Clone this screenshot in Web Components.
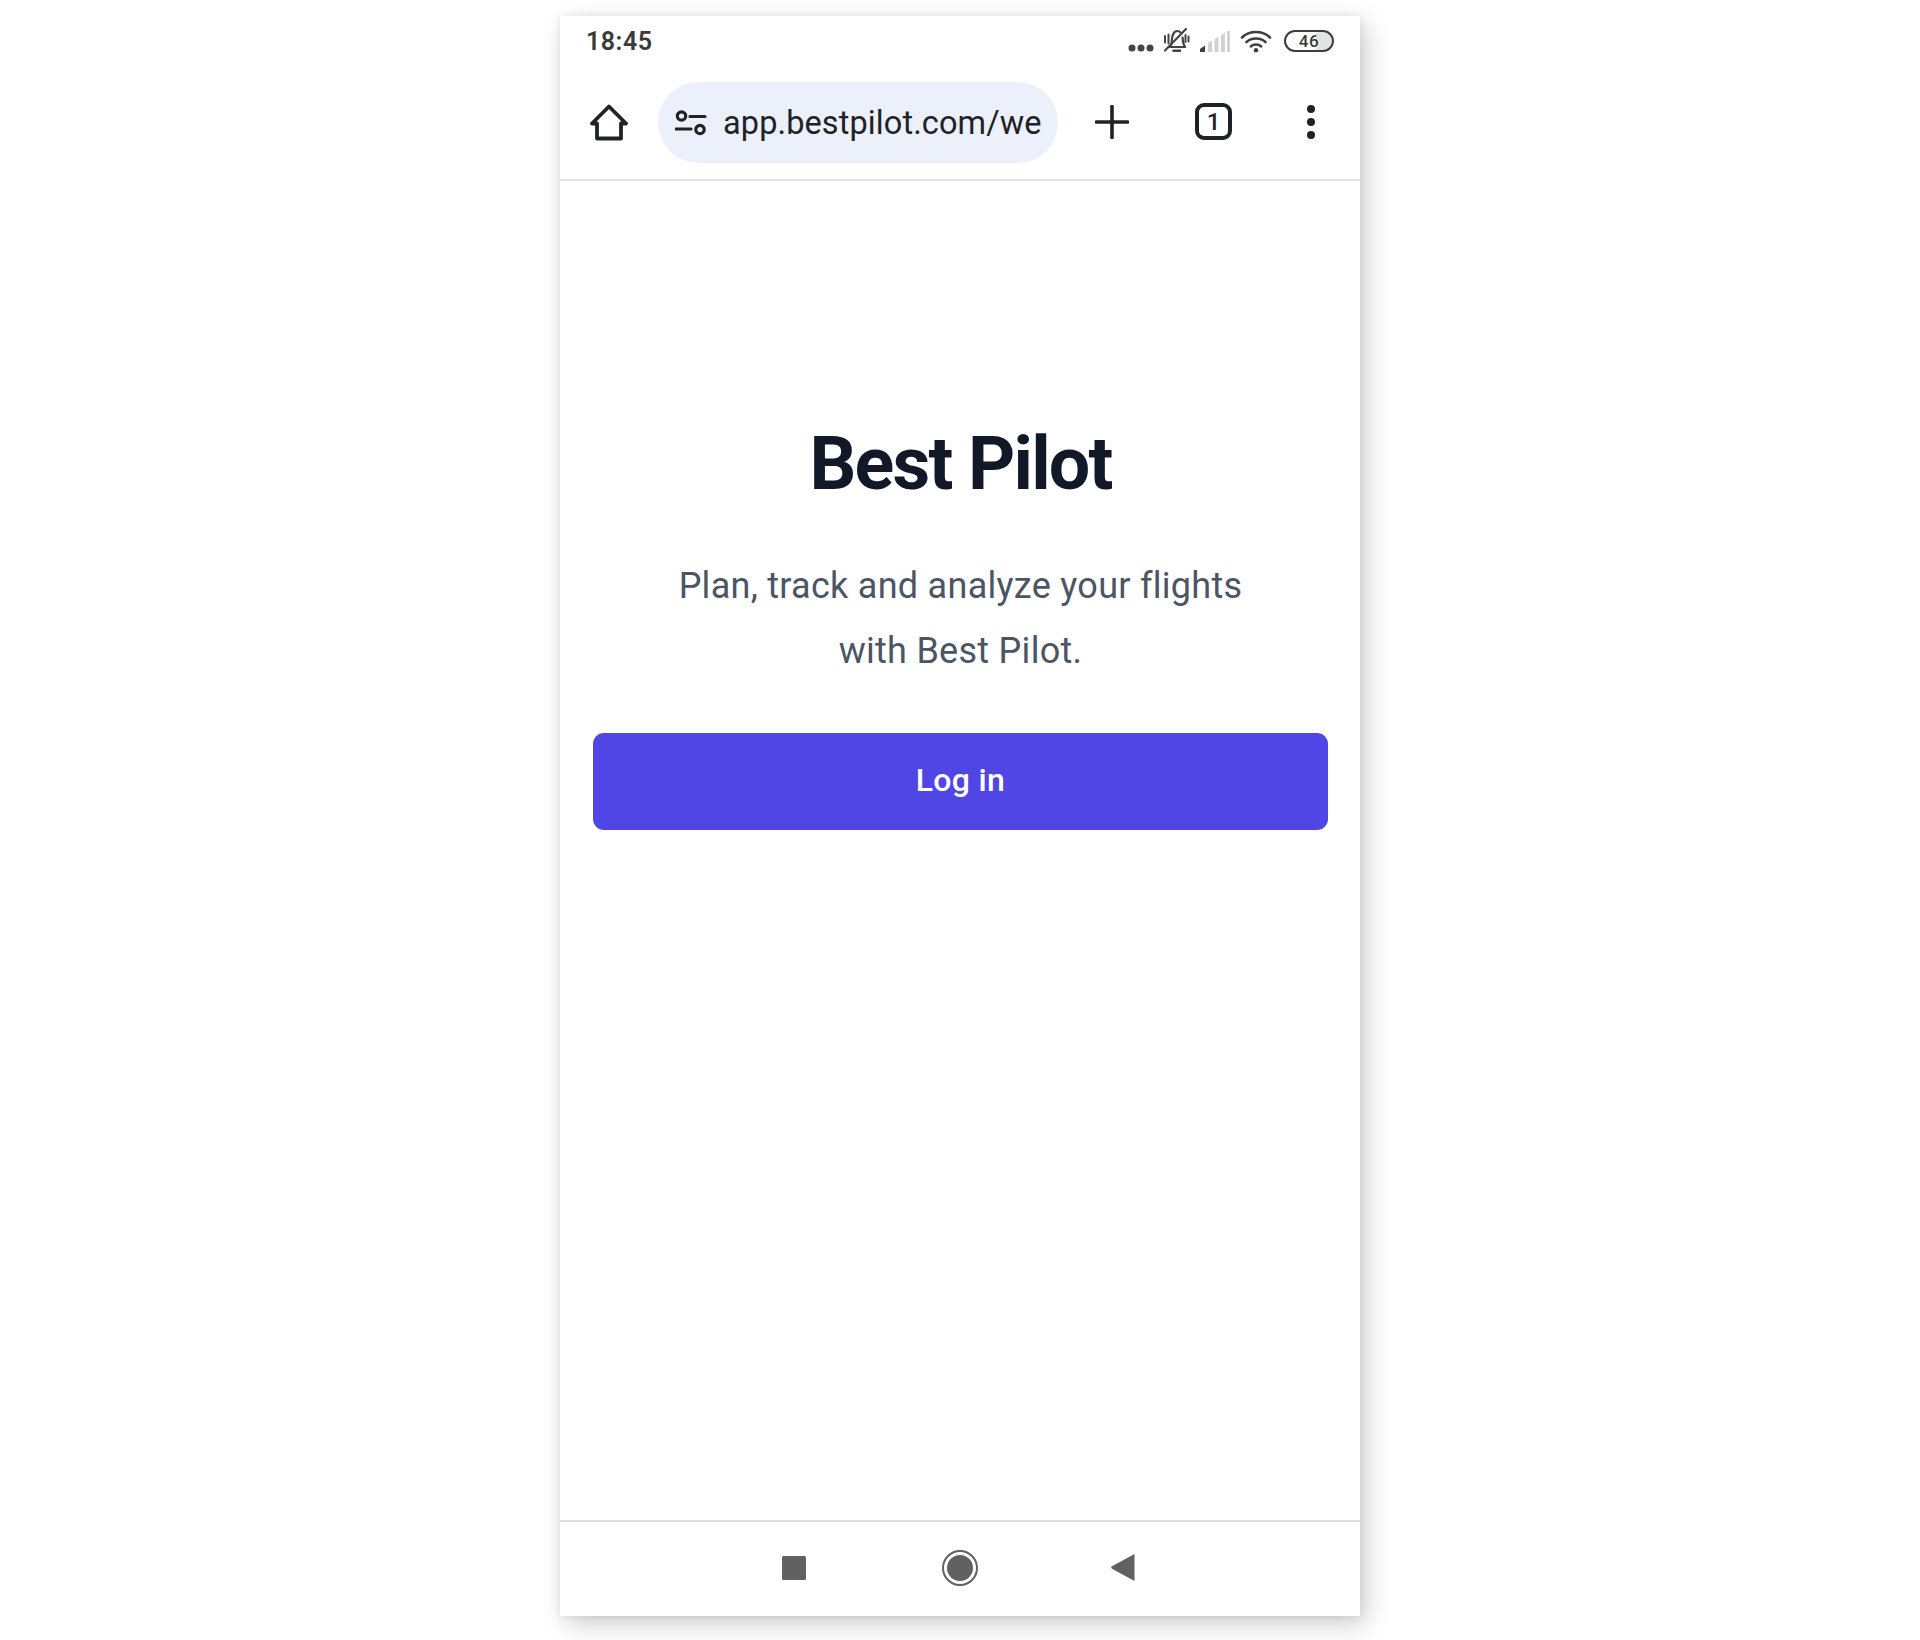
<!DOCTYPE html>
<html lang="en">
<head>
<meta charset="utf-8">
<title>Best Pilot</title>
<style>
  html, body { margin: 0; background: #fff; }
  body { height: 1640px; overflow: hidden; font-family: Roboto, "Liberation Sans", sans-serif; }
</style>
</head>
<body>
<phone-frame>
  <status-bar slot="top" time="18:45" battery="46"></status-bar>
  <browser-toolbar slot="top" url="app.bestpilot.com/we" tabs="1"></browser-toolbar>
  <login-hero heading="Best Pilot" action="Log in">
    Plan, track and analyze your flights<br>with Best Pilot.
  </login-hero>
  <nav-bar slot="bottom"></nav-bar>
</phone-frame>

<script>
// Marco del teléfono: arriba las barras, en medio el contenido, abajo la navegación
class PhoneFrame extends HTMLElement {
  connectedCallback() {
    this.attachShadow({ mode: "open" }).innerHTML = `
      <style>
        :host {
          display: flex;
          flex-direction: column;
          box-sizing: border-box;
          width: 800px;
          height: 1600px;
          margin: 16px auto 0;
          background: #fff;
          box-shadow: 6px 8px 24px rgba(0, 0, 0, .2), 0 0 8px rgba(0, 0, 0, .07);
        }
        main { flex: 1; min-height: 0; }
      </style>
      <slot name="top"></slot>
      <main><slot></slot></main>
      <slot name="bottom"></slot>
    `;
  }
}

class StatusBar extends HTMLElement {
  connectedCallback() {
    const time = this.getAttribute("time") ?? "";
    const battery = this.getAttribute("battery") ?? "";
    this.attachShadow({ mode: "open" }).innerHTML = `
      <style>
        :host {
          display: flex;
          align-items: center;
          box-sizing: border-box;
          height: 50px;
          padding: 0 26px;
          color: #3a3a3a;
        }
        .time { font: 600 25px/1 Roboto, sans-serif; letter-spacing: .5px; }
        .icons { margin-left: auto; display: flex; align-items: center; gap: 10px; }
        svg { display: block; }
        .battery {
          box-sizing: border-box;
          width: 50px;
          height: 22px;
          margin-left: 2px;
          border: 2px solid #3d3d3d;
          border-radius: 11px;
          overflow: hidden;
          display: flex;
          align-items: center;
          justify-content: center;
          font: 500 17px/1 Roboto, sans-serif;
          letter-spacing: .5px;
          background: linear-gradient(90deg, #fff 66%, #e4e4e4 66%);
        }
      </style>
      <span class="time">${time}</span>
      <div class="icons">
        <svg width="26" height="8" viewBox="0 0 26 8" style="margin-top:13px;margin-right:-2px" fill="#444">
          <circle cx="4" cy="4" r="3.500"/><circle cx="13" cy="4" r="3.500"/><circle cx="22" cy="4" r="3.500"/>
        </svg>
        <svg width="28" height="26" viewBox="0 0 28 26" fill="none" stroke="#444" stroke-width="2.200" stroke-linecap="round">
          <path d="M8 18.500c1.600-1.600 1.800-3.400 1.800-6 0-5 2-9.500 5.700-9.500 1.500 0 2.800.8 3.800 2.200M20.600 9.500c.2 4 .4 7 2.400 9M7.500 19h15.500"/>
          <path d="M11.500 22.800h6.500" stroke-width="2.600"/>
          <path d="M3 22.500 24 1"/>
          <path d="M3 8v6.500M6.500 6.500v9M23.500 7v7M26.500 8.500v5" stroke-width="2"/>
        </svg>
        <svg width="30" height="22" viewBox="0 0 30 22">
          <path d="M0 22v-3l5-3.500V22z" fill="#3f3f3f"/>
          <path d="M8 22V13l4-2.500V22zM14.500 22V9l4-2.500V22zM21 22V5l4-2.500V22zM27 22V1.500l3-1V22z" fill="#d2d2d2"/>
        </svg>
        <svg width="32" height="24" viewBox="0 0 32 24" fill="none" stroke="#3f3f3f" stroke-width="2.600" stroke-linecap="round">
          <path d="M2 8.500C9.500 1.200 22.500 1.200 30 8.500"/>
          <path d="M6.500 13C11.500 8.300 20.500 8.300 25.500 13"/>
          <path d="M11 17.300c2.800-2.400 7.200-2.400 10 0"/>
          <circle cx="16" cy="21.300" r="2.200" fill="#3f3f3f" stroke="none"/>
        </svg>
        <span class="battery">${battery}</span>
      </div>
    `;
  }
}

class BrowserToolbar extends HTMLElement {
  connectedCallback() {
    const url = this.getAttribute("url") ?? "";
    const tabs = this.getAttribute("tabs") ?? "1";
    this.attachShadow({ mode: "open" }).innerHTML = `
      <style>
        :host {
          display: flex;
          align-items: center;
          box-sizing: border-box;
          height: 115px;
          padding: 0 0 0 30px;
          border-bottom: 2px solid #e2e2e2;
          color: #1f2328;
        }
        svg { display: block; flex: none; }
        .pill {
          display: flex;
          align-items: center;
          box-sizing: border-box;
          width: 400px;
          height: 81px;
          margin-left: 30px;
          padding-left: 17px;
          border-radius: 41px;
          background: #ebf0fa;
        }
        .url {
          margin-left: 16px;
          padding-top: 2px;
          font: 400 32.500px/1 Roboto, sans-serif;
          letter-spacing: .1px;
          white-space: nowrap;
        }
        .plus, .tabs, .more { margin-bottom: 2px; }
        .plus { margin-left: 37px; }
        .tabs {
          box-sizing: border-box;
          width: 37px;
          height: 37px;
          margin-left: 66px;
          border: 4px solid #1f2328;
          border-radius: 9px;
          display: flex;
          align-items: center;
          justify-content: center;
          font: 500 24px/1 Roboto, sans-serif;
        }
        .more { margin-left: 74px; }
      </style>
      <svg width="38" height="38" viewBox="0 0 38 38" fill="none" stroke="#1f2328" stroke-width="3.800" stroke-linejoin="round">
        <path d="M2 19.500 19 2.500l17 17h-5v15H7v-15z"/>
      </svg>
      <div class="pill">
        <svg width="32" height="26" viewBox="0 0 32 26" fill="none" stroke="#1f2328" stroke-width="3.200">
          <circle cx="6.500" cy="6" r="4.200"/>
          <path d="M15 6.500h15M1 19h15" stroke-linecap="round"/>
          <circle cx="25" cy="19.500" r="4.200"/>
        </svg>
        <span class="url">${url}</span>
      </div>
      <svg class="plus" width="34" height="34" viewBox="0 0 34 34" stroke="#1f2328" stroke-width="3.600" stroke-linecap="round">
        <path d="M17 1.500v31M1.500 17h31"/>
      </svg>
      <span class="tabs">${tabs}</span>
      <svg class="more" width="10" height="36" viewBox="0 0 10 36" fill="#1f2328">
        <circle cx="5" cy="5" r="4"/><circle cx="5" cy="18" r="4"/><circle cx="5" cy="31" r="4"/>
      </svg>
    `;
  }
}

class LoginHero extends HTMLElement {
  connectedCallback() {
    const heading = this.getAttribute("heading") ?? "";
    const action = this.getAttribute("action") ?? "";
    this.attachShadow({ mode: "open" }).innerHTML = `
      <style>
        :host {
          display: block;
          box-sizing: border-box;
          padding: 243px 32px 0 33px;
          text-align: center;
        }
        h1 {
          margin: 0;
          font: 700 73.500px/80px Roboto, sans-serif;
          letter-spacing: -1.800px;
          color: #111827;
        }
        p {
          margin: 50px 0 0;
          font: 400 36px/65px Roboto, sans-serif;
          letter-spacing: .28px;
          color: #4b5563;
        }
        button {
          display: block;
          width: 100%;
          height: 97px;
          margin-top: 49px;
          padding: 0 0 3px;
          border: 0;
          border-radius: 11px;
          background: #4f46e5;
          color: #fff;
          font: 500 32px/1 Roboto, sans-serif;
          letter-spacing: .35px;
        }
      </style>
      <h1>${heading}</h1>
      <p><slot></slot></p>
      <button type="button">${action}</button>
    `;
  }
}

class NavBar extends HTMLElement {
  connectedCallback() {
    this.attachShadow({ mode: "open" }).innerHTML = `
      <style>
        :host {
          display: flex;
          align-items: center;
          justify-content: center;
          gap: 136px;
          box-sizing: border-box;
          height: 96px;
          padding: 0 4px 3px 0;
          border-top: 2px solid #dcdcdc;
        }
        svg { display: block; }
        .back { margin-left: -3px; }
      </style>
      <svg width="24" height="24" viewBox="0 0 24 24" fill="#616161"><rect width="24" height="24" rx="1.500"/></svg>
      <svg width="36" height="36" viewBox="0 0 36 36">
        <circle cx="18" cy="18" r="17" fill="none" stroke="#616161" stroke-width="2"/>
        <circle cx="18" cy="18" r="13" fill="#616161"/>
      </svg>
      <svg class="back" width="24" height="27" viewBox="0 0 24 27" fill="#616161"><path d="M23.500 0v27L1 14.700a1.500 1.500 0 0 1 0-2.400z"/></svg>
    `;
  }
}

customElements.define("phone-frame", PhoneFrame);
customElements.define("status-bar", StatusBar);
customElements.define("browser-toolbar", BrowserToolbar);
customElements.define("login-hero", LoginHero);
customElements.define("nav-bar", NavBar);
</script>
</body>
</html>
